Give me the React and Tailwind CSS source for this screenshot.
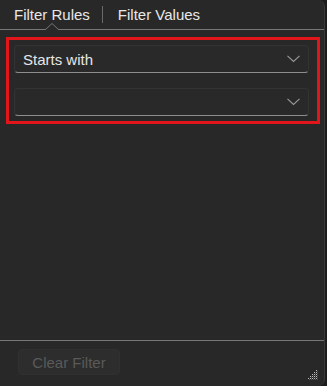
import React from "react";

function Chevron() {
  return (
    <svg width="13" height="8" viewBox="0 0 13 8" className="shrink-0">
      <path d="M0.5 0.8 L6.5 6.5 L12.5 0.8" fill="none" stroke="#9a9a9a" strokeWidth="1.1" />
    </svg>
  );
}

function Select({ value }) {
  return (
    <div className="flex h-[28px] items-center justify-between rounded-[4px] border border-[#333333] border-b-[#8e8e8e] bg-[#292929] pl-[8px] pr-[8px]">
      <span className="text-[15px] leading-[17px] text-[#e6e6e6]">{value}</span>
      <Chevron />
    </div>
  );
}

function Grip() {
  const dots = [
    [8, 0],
    [6, 2], [8, 2],
    [4, 4], [6, 4], [8, 4],
    [2, 6], [4, 6], [6, 6], [8, 6],
    [0, 8], [2, 8], [4, 8], [6, 8], [8, 8],
  ];
  return (
    <svg width="10" height="10" viewBox="0 0 10 10" className="absolute bottom-[6px] right-[6px]">
      {dots.map(([x, y], i) => (
        <rect key={i} x={x} y={y} width="1" height="1" fill="#bdbdbd" />
      ))}
      {dots.map(([x, y], i) => (
        <rect key={"s" + i} x={x + 1} y={y + 1} width="1" height="1" fill="#555555" />
      ))}
    </svg>
  );
}

export default function App() {
  return (
    <div
      className="h-[386px] w-[327px] bg-[#1c1c1c]"
      style={{ fontFamily: '"Liberation Sans", Arial, sans-serif' }}
    >
      <div className="relative flex h-[386px] w-[325px] flex-col rounded-r-[7px] border-r border-[#3a3a3a] bg-[#282828]">
        {/* Tabs */}
        <div className="relative flex h-[29px] items-center pl-[14px] text-[15px] leading-[17px]">
          <div className="relative text-[#e8e8e8]">
            Filter Rules
            <svg width="14" height="7" viewBox="0 0 14 7" className="absolute left-1/2 top-[17px] -translate-x-1/2">
              <path d="M0 7 L7 0.5 L14 7" fill="#282828" stroke="#777777" strokeWidth="1" />
            </svg>
          </div>
          <div className="ml-[12px] mr-[15px] h-[17px] w-px bg-[#6a6a6a]" />
          <div className="text-[#e8e8e8]">Filter Values</div>
        </div>
        <div className="h-px bg-[#777777]" />

        {/* Content */}
        <div className="pl-[6px] pt-[7px]">
          <div className="flex w-[314px] flex-col gap-[15px] border-[3px] border-[#e0161b] pb-[5px] pl-[5px] pr-[8px] pt-[5px]">
            <Select value="Starts with" />
            <Select value="" />
          </div>
        </div>

        <div className="flex-1" />

        {/* Footer */}
        <div className="h-px bg-[#777777]" />
        <div className="h-[45px] pl-[18px] pt-[8px]">
          <button className="flex h-[26px] w-[102px] items-center justify-center rounded-[4px] border border-[#303030] bg-[#2d2d2d] text-[15px] leading-[17px] text-[#5a5a5a]">
            Clear Filter
          </button>
        </div>
        <Grip />
      </div>
    </div>
  );
}
